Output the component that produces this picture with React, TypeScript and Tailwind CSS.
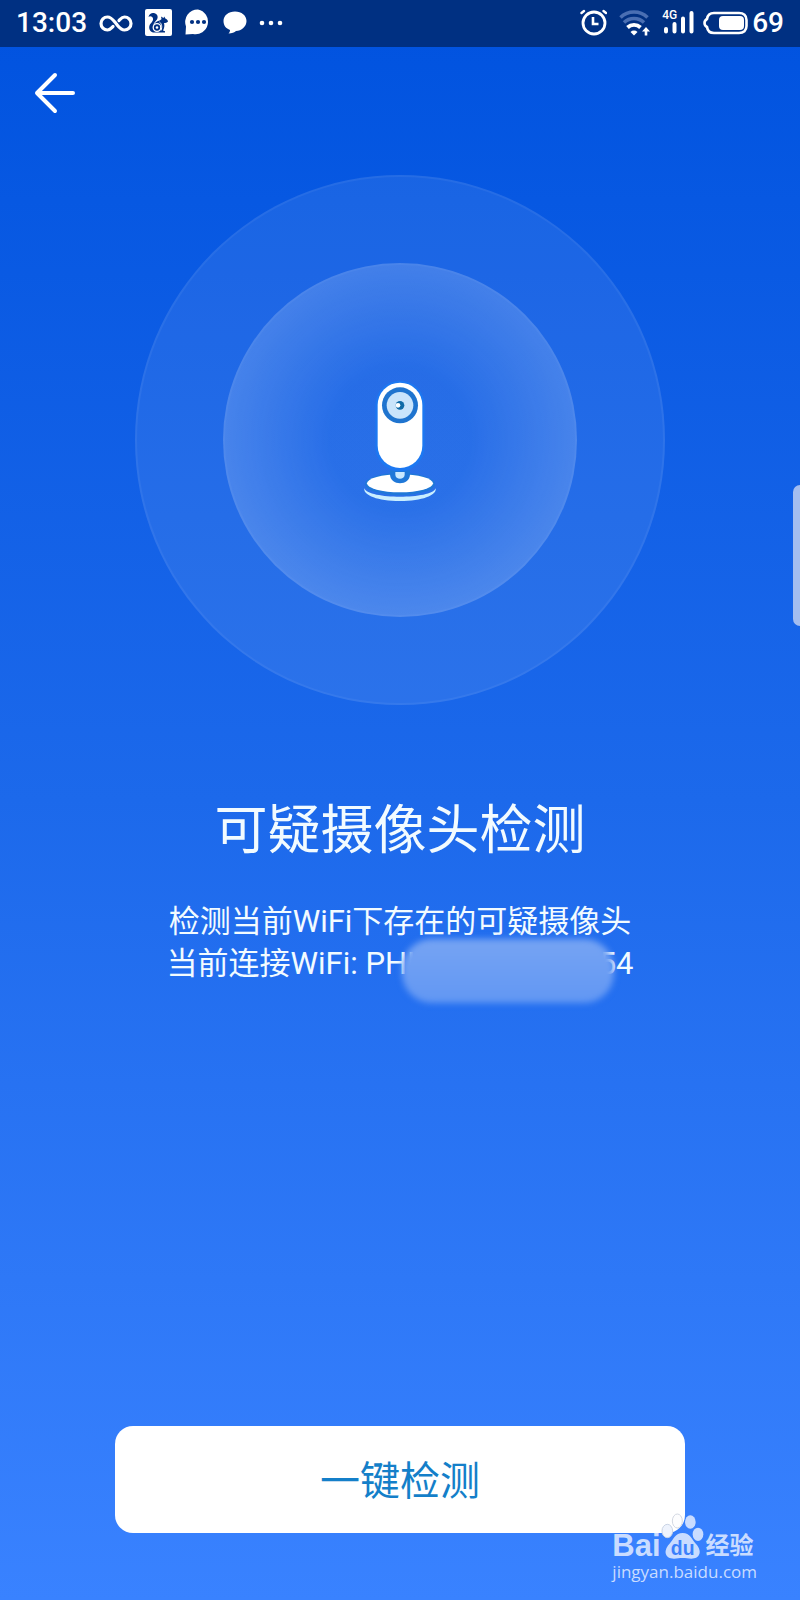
import type { ReactNode } from "react";

function StatusIcon({ w, h, children }: { w: number; h: number; children: ReactNode }) {
  return (
    <svg width={w} height={h} viewBox={`0 0 ${w} ${h}`} fill="none" className="shrink-0" aria-hidden="true">
      {children}
    </svg>
  );
}

function StatusBar() {
  return (
    <div className="flex h-[47px] items-center justify-between bg-[#003082] px-4 pb-[2px] font-['Roboto',sans-serif] text-[28px] font-medium text-white">
      <div className="flex items-center gap-3">
        <span className="leading-8">13:03</span>
        {/* Infinity */}
        <StatusIcon w={34} h={20}>
          <path
            d="M14 13.500C12 15.500 11 17 8.500 17a6.500 6.500 0 0 1 0-13c4 0 6 3.500 8.500 6.500s4.500 6.500 8.500 6.500a6.500 6.500 0 0 0 0-13C23 4 22 5.500 20 7.500"
            stroke="white"
            strokeWidth="3.200"
            strokeLinecap="round"
          />
        </StatusIcon>
        {/* Squirrel browser */}
        <StatusIcon w={27} h={27}>
          <rect width="27" height="27" rx="2" fill="white" />
          <path
            d="M3.500 8C4 4.500 7 3.500 9 4c3.500.8 4.500 4 3 6.500-1.300 2-3.500 3-3.500 6 1-2.500 3-4.500 6-5 1-.2 1.500-1 2-1.500L16 7.500l2.500 1.500.8-1.500 1 2c1.500.5 2.500 1.500 2.700 3-1 1.200-2.500 1.500-4 1.500.8 2.500.3 5-1 7.500l2 .8V23.500H8c-3-1-4.500-4-3.500-7C5.500 14 8.500 12.500 8 9.500 7.500 7.500 5 6.500 3.500 8Z"
            fill="#003082"
          />
          <circle cx="12" cy="18.500" r="3.800" stroke="white" strokeWidth="1.300" />
          <circle cx="12" cy="18.500" r="1.300" fill="white" />
          <path d="M14.500 13c2 1.500 3 4.500 1.500 8.500" stroke="white" strokeWidth="1" />
        </StatusIcon>
        {/* Messages */}
        <StatusIcon w={27} h={27}>
          <path d="M14 0.500a12.500 12.500 0 1 1-5 24.500L1.500 25.500l.5-8A12.500 12.500 0 0 1 14 .5Z" fill="white" />
          <circle cx="8" cy="13" r="2.100" fill="#003082" />
          <circle cx="14" cy="13" r="2.100" fill="#003082" />
          <circle cx="20" cy="13" r="2.100" fill="#003082" />
        </StatusIcon>
        <StatusIcon w={24} h={23}>
          <path d="M12 .5c6.500 0 11.500 4 11.500 9.500S18.500 20 13 20c-1.500 1.500-4 2.500-7.500 2.500 1-1 1.500-2 1.500-3.500C3 17.500 .5 14.500 .5 10 .5 4.500 5.500 .5 12 .5Z" fill="white" />
        </StatusIcon>
        <StatusIcon w={24} h={6}>
          <circle cx="3" cy="3" r="2.300" fill="white" />
          <circle cx="12" cy="3" r="2.300" fill="white" />
          <circle cx="21" cy="3" r="2.300" fill="white" />
        </StatusIcon>
      </div>

      <div className="flex items-center">
        {/* Alarm */}
        <StatusIcon w={28} h={28}>
          <circle cx="15" cy="14" r="11" stroke="white" strokeWidth="2.800" />
          <path d="M14 8v7h5.500" stroke="white" strokeWidth="2.600" />
          <path d="M2.500 4 5 2M27 4 24.500 2" stroke="white" strokeWidth="2.400" strokeLinecap="round" />
        </StatusIcon>
        <div className="ml-3">
          {/* Wi-Fi with the two outer arcs dimmed */}
          <StatusIcon w={32} h={26}>
            <path d="M1.500 7.500a19.500 19.500 0 0 1 27 0" stroke="#4a6fb3" strokeWidth="3.600" />
            <path d="M5 12.500a14.500 14.500 0 0 1 20 0" stroke="#4a6fb3" strokeWidth="3.600" />
            <path d="M8.500 17.500a9.500 9.500 0 0 1 13 0" stroke="white" strokeWidth="3.800" />
            <path d="M15 25.500 11.500 22a5 5 0 0 1 7 0Z" fill="white" />
            <path d="m27 17 4 4.500h-2.700v4h-2.600v-4H23Z" fill="white" />
          </StatusIcon>
        </div>
        <div className="relative ml-3">
          <span className="absolute -top-[2px] -left-px text-[12px] leading-3">4G</span>
          <StatusIcon w={31} h={23}>
            <path d="M3 18v2.500M11.500 13v7.500M20 7.500v13M28.500 2v18.500" stroke="white" strokeWidth="4" strokeLinecap="round" />
          </StatusIcon>
        </div>
        <div className="ml-2">
          {/* Battery */}
          <StatusIcon w={46} h={24}>
            <path d="M5 8C5.500 4.500 8 2 12 2H37c4.500 0 7.500 2.500 7.500 7v6c0 4.500-3 7-7.500 7H12C8 22 5.500 19.500 5 16c-1.500-.8-2.500-2.200-2.500-4S3.500 8.800 5 8Z" stroke="white" strokeWidth="2.600" />
            <rect x="17" y="5" width="25" height="14" rx="4" fill="white" />
          </StatusIcon>
        </div>
        <span className="ml-1 leading-8">69</span>
      </div>
    </div>
  );
}

function Camera() {
  return (
    <svg viewBox="72 56 216 369" className="h-[123px] w-[72px]" aria-hidden="true">
      <path d="M73 384c12 34 202 34 214 0 4 18-35 38-107 38S69 402 73 384Z" fill="#c9eeff" />
      <ellipse cx="180" cy="371" rx="105" ry="33" fill="#1f78d8" />
      <ellipse cx="180" cy="369" rx="99" ry="27" fill="white" />
      <path d="M150 330h60v12c0 36-60 36-60 0Z" fill="#1f78d8" />
      <path d="M166 335h28v8c0 16-28 16-28 0Z" fill="#c9e9ff" />
      <rect x="106" y="61" width="148" height="272" rx="74" fill="#1c78f2" />
      <rect x="113" y="67" width="134" height="256" rx="67" fill="white" />
      <circle cx="180" cy="135" r="54" fill="#1f74cf" />
      <circle cx="180" cy="135" r="40" fill="#c9e4fb" />
      <circle cx="180" cy="135" r="13" fill="#0f6ba8" />
      <circle cx="174" cy="135" r="7" fill="white" />
    </svg>
  );
}

function Watermark() {
  return (
    <div className="pointer-events-none absolute right-[43px] bottom-4 flex flex-col items-start text-[#c9dcff]">
      <div className="flex items-end">
        <span className="font-['Liberation_Sans',sans-serif] text-[31px] leading-7 font-bold">Bai</span>
        <svg viewBox="213 70 129 141" className="h-[47px] w-[43px]" aria-hidden="true">
          <g fill="#c9dcff">
            <ellipse cx="232" cy="124" rx="16" ry="20" fill="#eef3fd" stroke="#c9d3e4" strokeWidth="3" />
            <ellipse cx="262" cy="94" rx="15" ry="21" fill="#fdfdfe" stroke="#d3d8e2" strokeWidth="3" />
            <ellipse cx="301" cy="97" rx="16" ry="20" />
            <ellipse cx="324" cy="134" rx="16" ry="20" />
            <path d="M278 130c22 0 28 20 40 33 20 22 12 44-14 44-10 0-16-2-26-2s-16 2-26 2c-26 0-34-22-14-44 12-13 18-33 40-33Z" />
          </g>
          <text x="278" y="195" textAnchor="middle" fontSize="58" fontWeight="700" fill="#3b80fb" fontFamily="Liberation Sans, sans-serif">
            du
          </text>
        </svg>
        <span className="ml-[2px] font-['Noto_Sans_CJK_SC',sans-serif] text-[24px] leading-8 font-bold">经验</span>
      </div>
      <span className="font-['Open_Sans',sans-serif] text-[17px] leading-6">jingyan.baidu.com</span>
    </div>
  );
}

export default function App() {
  return (
    <div className="relative flex min-h-screen flex-col overflow-hidden bg-linear-to-b from-[#0052df] via-[#1c69eb] to-[#3982ff] font-['Roboto','Noto_Sans_CJK_SC',sans-serif] text-[#f2fbff]">
      <StatusBar />

      <header className="flex h-[92px] items-center px-8">
        <button type="button" aria-label="返回" className="text-white">
          <svg width="46" height="46" viewBox="0 0 46 46" fill="none" stroke="currentColor" strokeWidth="4" strokeLinecap="round" strokeLinejoin="round">
            <path d="M23 5 5 23l18 18M5 23h36" />
          </svg>
        </button>
      </header>

      <main className="flex flex-1 flex-col items-center">
        {/* Radar rings */}
        <div className="mt-9 flex size-[530px] items-center justify-center rounded-full border-2 border-white/5 bg-white/8">
          <div className="flex size-[354px] items-center justify-center rounded-full border-2 border-white/4 bg-radial-[closest-side] from-white/3 from-40% to-white/17">
            <Camera />
          </div>
        </div>

        <h1 className="mt-24 text-[53px] leading-[60px]">可疑摄像头检测</h1>
        <div className="mt-10 w-[467px] text-center text-[31px] leading-[42px]">
          <p>检测当前WiFi下存在的可疑摄像头</p>
          <p className="relative flex justify-between whitespace-pre">
            <span>当前连接WiFi: PHI</span>
            <span>54</span>
            {/* Network name is masked */}
            <span className="absolute -top-1 right-5 h-16 w-[212px] rounded-[30px] bg-linear-to-b from-[#76a4f3] to-[#6297f3] blur-[3px]" />
          </p>
        </div>

        <div className="mt-auto w-full px-[115px] pt-10 pb-[67px]">
          <button type="button" className="h-[107px] w-full rounded-[18px] bg-white pt-1 text-[40px] text-[#147fc9]">
            一键检测
          </button>
        </div>
      </main>

      {/* Edge handle */}
      <div className="absolute top-[485px] right-0 h-[141px] w-[7px] rounded-l-lg bg-[#a3bdf0]" />
      <Watermark />
    </div>
  );
}
